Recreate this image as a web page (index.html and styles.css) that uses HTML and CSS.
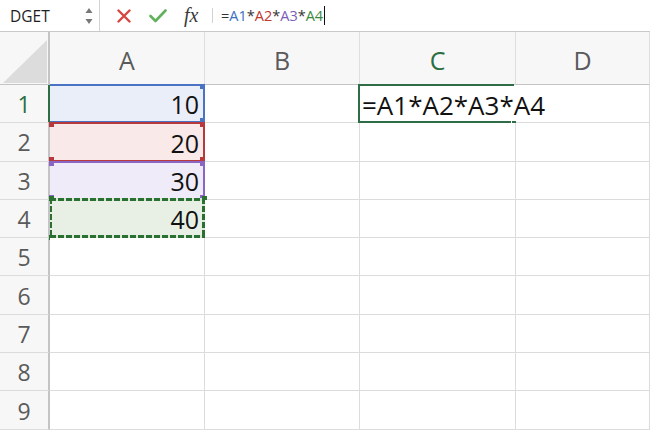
FILE: index.html
```html
<!DOCTYPE html>
<html>
<head>
<meta charset="utf-8">
<link rel="stylesheet" href="styles.css">
</head>
<body>
<div class="app">
  <div class="fbar">
    <div class="namebox">
      <span class="name">DGET</span>
      <svg class="spin" width="8" height="18" viewBox="0 0 8 18">
        <path d="M4 1 L7.5 6 H0.5 Z" fill="#777"/>
        <path d="M4 17 L7.5 12 H0.5 Z" fill="#777"/>
      </svg>
    </div>
    <div class="tools">
      <svg class="xicon" width="14" height="14" viewBox="0 0 14 14">
        <path d="M1.5 1.5 L12.5 12.5 M12.5 1.5 L1.5 12.5" stroke="#d8453e" stroke-width="2.4" stroke-linecap="round"/>
      </svg>
      <svg class="check" width="18" height="14" viewBox="0 0 18 14">
        <path d="M1.5 7 L6.5 12 L16.5 1.5" stroke="#62b25d" stroke-width="2.6" fill="none" stroke-linecap="round" stroke-linejoin="round"/>
      </svg>
      <span class="fx">fx</span>
      <span class="vsep"></span>
    </div>
    <div class="formula"><span class="op">=</span><span class="c-blue">A1</span><span class="op">*</span><span class="c-red">A2</span><span class="op">*</span><span class="c-purple">A3</span><span class="op">*</span><span class="c-green">A4</span><span class="caret"></span></div>
  </div>

  <div class="sheet">
    <div class="corner"><div class="tri"></div></div>
    <div class="colhead">A</div>
    <div class="colhead">B</div>
    <div class="colhead is-sel">C</div>
    <div class="colhead">D</div>

    <div class="rowhead is-sel">1</div>
    <div class="cell num fill-blue">10<span class="range blue"><i class="sq tr"></i><i class="sq br"></i></span></div>
    <div class="cell"></div>
    <div class="cell active"><span class="entry">=A1*A2*A3*A4</span><span class="selbox"></span><i class="handle"></i></div>
    <div class="cell"></div>

    <div class="rowhead">2</div>
    <div class="cell num fill-red">20<span class="range red"><i class="sq tl"></i><i class="sq tr"></i><i class="sq bl"></i><i class="sq br"></i></span></div>
    <div class="cell"></div>
    <div class="cell"></div>
    <div class="cell"></div>

    <div class="rowhead">3</div>
    <div class="cell num fill-purple">30<span class="range purple"><i class="sq tl"></i><i class="sq tr"></i><i class="sq bl"></i><i class="sq br"></i></span></div>
    <div class="cell"></div>
    <div class="cell"></div>
    <div class="cell"></div>

    <div class="rowhead">4</div>
    <div class="cell num fill-green">40<span class="range dashed"><i class="sq tl"></i><i class="sq tr"></i><i class="sq bl"></i><i class="sq br"></i></span></div>
    <div class="cell"></div>
    <div class="cell"></div>
    <div class="cell"></div>

    <div class="rowhead">5</div>
    <div class="cell"></div><div class="cell"></div><div class="cell"></div><div class="cell"></div>
    <div class="rowhead">6</div>
    <div class="cell"></div><div class="cell"></div><div class="cell"></div><div class="cell"></div>
    <div class="rowhead">7</div>
    <div class="cell"></div><div class="cell"></div><div class="cell"></div><div class="cell"></div>
    <div class="rowhead">8</div>
    <div class="cell"></div><div class="cell"></div><div class="cell"></div><div class="cell"></div>
    <div class="rowhead">9</div>
    <div class="cell"></div><div class="cell"></div><div class="cell"></div><div class="cell"></div>
  </div>
</div>
</body>
</html>
```

FILE: styles.css
```css
html, body {
  margin: 0;
  padding: 0;
  background: #fff;
  overflow: hidden;
}
* { box-sizing: border-box; }

.app {
  width: 650px;
  height: 433px;
  font-family: "Open Sans", "Liberation Sans", sans-serif;
  color: #111;
}

/* formula bar */
.fbar {
  height: 32px;
  display: flex;
  align-items: stretch;
  border-bottom: 1px solid #c9c9c9;
  background: #fff;
}
.namebox {
  width: 100px;
  display: flex;
  align-items: center;
  padding-left: 10px;
  padding-right: 6px;
  border-right: 1px solid #d4d4d4;
}
.name {
  font-size: 15.5px;
  color: #1e1e1e;
}
.spin { margin-left: auto; }
.tools {
  display: flex;
  align-items: center;
  padding-left: 17px;
}
.xicon { margin-right: 18px; }
.check { margin-right: 17px; }
.fx {
  font-family: "Liberation Serif", "DejaVu Serif", serif;
  font-style: italic;
  font-size: 20px;
  color: #3a3a3a;
  width: 18px;
  line-height: 1;
  margin-top: -2px;
}
.vsep {
  width: 1px;
  height: 15px;
  background: #d2d2d2;
  margin-left: 10px;
}
.formula {
  display: flex;
  align-items: center;
  padding-left: 8px;
  font-size: 14.5px;
  color: #333;
}
.c-blue { color: #3d6fc5; }
.c-red { color: #c0392f; }
.c-purple { color: #7d5db8; }
.c-green { color: #3b8a3e; }
.caret {
  width: 1px;
  height: 19px;
  background: #111;
  margin-left: 1px;
}

/* sheet */
.sheet {
  display: grid;
  grid-template-columns: 50px 155px 155px 156px 1fr;
  grid-template-rows: 53px repeat(9, 38.3px);
}
.corner {
  background: #f7f7f7;
  border-right: 2px solid #c4c4c4;
  border-bottom: 1px solid #c4c4c4;
  display: flex;
  align-items: flex-end;
  justify-content: flex-end;
  padding: 0 1px 1px 0;
}
.tri {
  width: 44px;
  height: 43px;
  background: #dcdcdc;
  clip-path: polygon(100% 0, 100% 100%, 0 100%);
}
.colhead {
  background: #f7f7f7;
  border-right: 1px solid #dedede;
  border-bottom: 1px solid #c4c4c4;
  display: flex;
  align-items: center;
  justify-content: center;
  padding-top: 4px;
  font-size: 25px;
  color: #5a5a5a;
}
.colhead.is-sel { color: #2b6e42; }
.rowhead {
  background: #f7f7f7;
  border-right: 2px solid #c4c4c4;
  border-bottom: 1px solid #dcdcdc;
  display: flex;
  align-items: center;
  justify-content: center;
  padding-top: 1px;
  font-size: 23px;
  color: #5a5a5a;
}
.rowhead.is-sel {
  color: #2b6e42;
  border-right-color: #2b6e42;
}
.cell {
  position: relative;
  border-right: 1px solid #dcdcdc;
  border-bottom: 1px solid #dcdcdc;
  background: #fff;
  white-space: nowrap;
}
.num {
  display: flex;
  align-items: flex-end;
  justify-content: flex-end;
  padding-right: 5px;
  padding-bottom: 3px;
  font-size: 25px;
  line-height: 1.2;
  color: #111;
}
.fill-blue { background: #e9eef9; }
.fill-red { background: #f9e9e8; }
.fill-purple { background: #efebf8; }
.fill-green { background: #e8f0e6; }

.range {
  position: absolute;
  left: 0;
  right: -1px;
  top: -1px;
  bottom: -1px;
  border: 2px solid currentColor;
  border-left: none;
}
.blue { color: #4a73c4; }
.red { color: #b8393b; }
.purple { color: #8a66c4; }
.dashed {
  color: #2a7030;
  border: none;
  top: -2px;
  background:
    repeating-linear-gradient(90deg, #2a7030 0 6px, #d8e8d6 6px 8px) top left / 100% 3px no-repeat,
    repeating-linear-gradient(90deg, #2a7030 0 6px, #d8e8d6 6px 8px) bottom left / 100% 3px no-repeat,
    repeating-linear-gradient(180deg, #2a7030 0 6px, #d8e8d6 6px 8px) top right / 3px 100% no-repeat,
    repeating-linear-gradient(180deg, #2a7030 0 6px, transparent 6px 8px) top left / 2px 100% no-repeat;
}
.sq {
  position: absolute;
  width: 5px;
  height: 5px;
  background: currentColor;
}
.sq.tl { top: -2px; left: -1px; }
.sq.tr { top: -2px; right: -2px; }
.sq.bl { bottom: -2px; left: -1px; }
.sq.br { bottom: -2px; right: -2px; }
.blue .sq.tr { top: 0; height: 3px; }

.active {
  border-right-color: transparent;
  display: flex;
  align-items: flex-end;
  padding-left: 2px;
  padding-bottom: 1px;
}
.entry {
  position: relative;
  z-index: 2;
  font-size: 26px;
  line-height: 1.2;
  color: #111;
}
.selbox {
  position: absolute;
  left: -2px;
  top: -1px;
  bottom: -1px;
  right: 1px;
  border: 2px solid #2e6d45;
  border-right: none;
}
.handle {
  position: absolute;
  right: -2px;
  bottom: -4px;
  width: 6px;
  height: 6px;
  background: #2e6d45;
  border: 1px solid #fff;
}
```
